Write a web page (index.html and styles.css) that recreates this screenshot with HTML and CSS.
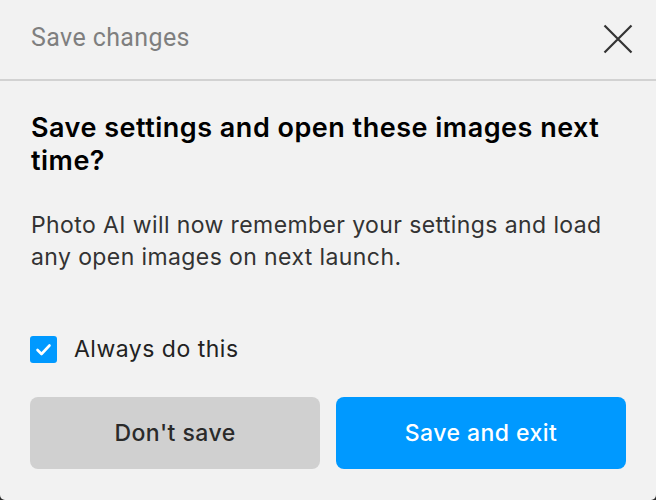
FILE: index.html
```html
<!DOCTYPE html>
<html>
<head>
<meta charset="utf-8">
<link rel="stylesheet" href="styles.css">
</head>
<body>
<div class="dialog">
  <div class="header">
    <span class="title">Save changes</span>
    <svg class="close" width="30" height="30" viewBox="0 0 30 30"><path d="M1.5 1.5 L28.5 28.5 M28.5 1.5 L1.5 28.5" stroke="#333" stroke-width="2.2" fill="none"/></svg>
  </div>
  <div class="content">
    <h1 class="heading">Save settings and open these images next time?</h1>
    <p class="text">Photo AI will now remember your settings and load any open images on next launch.</p>
    <label class="check">
      <span class="box"><svg width="27" height="27" viewBox="0 0 27 27"><path d="M7.5 14 L11.5 18 L19.5 9.5" stroke="#fff" stroke-width="2.6" fill="none" stroke-linecap="round" stroke-linejoin="round"/></svg></span>
      <span class="check-label">Always do this</span>
    </label>
    <div class="buttons">
      <button class="btn btn-secondary">Don't save</button>
      <button class="btn btn-primary">Save and exit</button>
    </div>
  </div>
</div>
</body>
</html>
```
FILE: styles.css
```css
html, body {
  margin: 0;
  padding: 0;
  background: #2a2a2a;
}
.dialog {
  width: 656px;
  height: 500px;
  background: #f2f2f2;
  border-radius: 0 0 5px 5px;
  font-family: Inter, "Noto Sans", sans-serif;
  box-sizing: border-box;
  overflow: hidden;
}
.header {
  height: 79px;
  display: flex;
  align-items: center;
  justify-content: space-between;
  padding: 0 23px 0 31px;
  border-bottom: 2px solid #d2d2d2;
}
.title {
  font-family: Roboto, sans-serif;
  font-size: 25px;
  letter-spacing: 0.4px;
  color: #7f7f7f;
  margin-top: -4px;
}
.close {
  display: block;
  margin-top: -2px;
}
.content {
  padding: 0 20px 0 31px;
}
.heading {
  margin: 30px 0 0 0;
  font-size: 27px;
  font-weight: 600;
  line-height: 33px;
  letter-spacing: 0.5px;
  color: #000;
}
.text {
  margin: 32px 0 0 0;
  font-size: 23px;
  line-height: 32px;
  letter-spacing: 0.4px;
  color: #333;
}
.check {
  display: flex;
  align-items: center;
  gap: 17px;
  margin-top: 62px;
  margin-left: -1px;
}
.box {
  width: 27px;
  height: 27px;
  background: #0099ff;
  border-radius: 3px;
  display: block;
}
.box svg { display: block; }
.check-label {
  font-size: 23px;
  letter-spacing: 0.5px;
  color: #222;
}
.buttons {
  display: flex;
  gap: 16px;
  margin-top: 34px;
  margin-left: -1px;
}
.btn {
  width: 290px;
  height: 72px;
  border: none;
  border-radius: 8px;
  font-family: Inter, "Noto Sans", sans-serif;
  font-size: 23px;
  font-weight: 500;
  letter-spacing: 0.45px;
  padding: 0;
}
.btn-secondary {
  background: #d0d0d0;
  color: #2a2a2a;
}
.btn-primary {
  background: #0099ff;
  color: #fff;
}
```
